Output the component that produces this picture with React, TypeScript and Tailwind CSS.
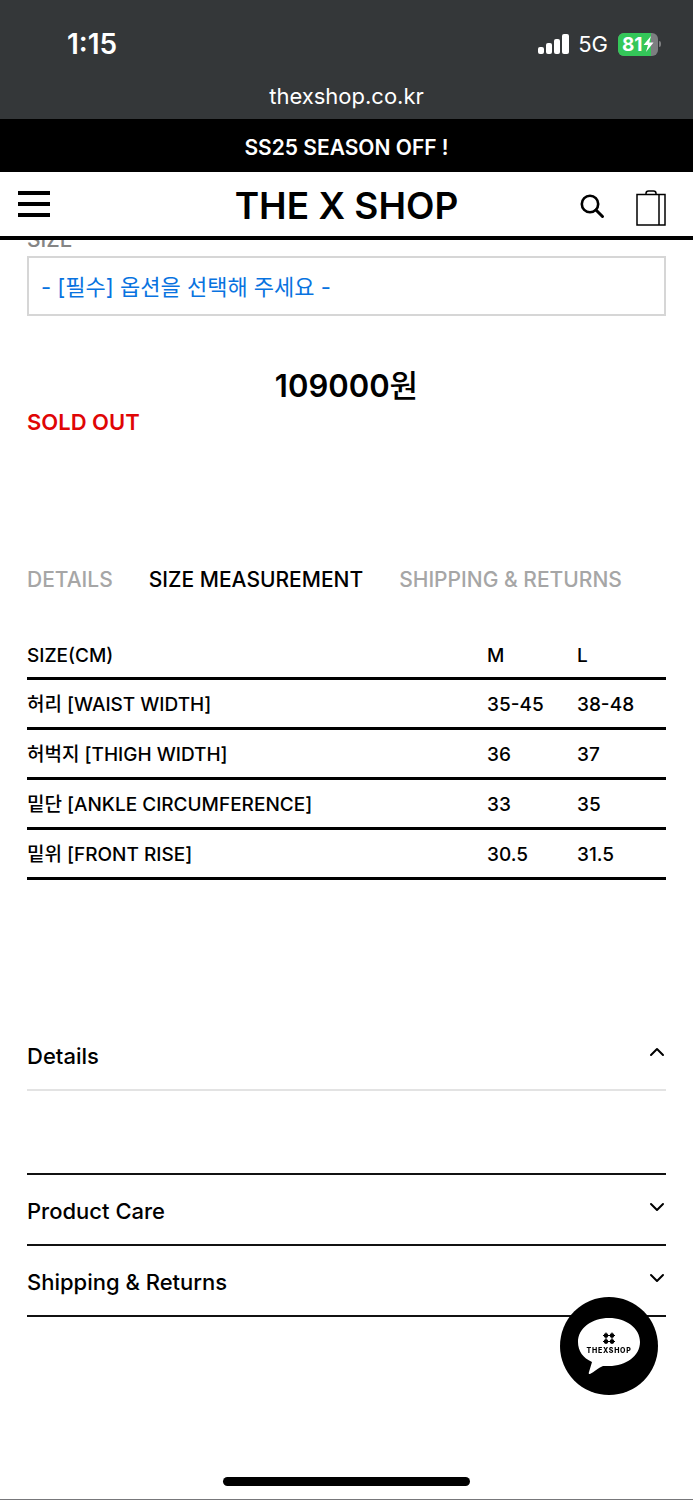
import { useState } from "react";
import { ChevronDown, ChevronUp } from "lucide-react";

const tabs = ["DETAILS", "SIZE MEASUREMENT", "SHIPPING & RETURNS"];

const measurements = [
    { label: "허리 [WAIST WIDTH]", m: "35-45", l: "38-48" },
    { label: "허벅지 [THIGH WIDTH]", m: "36", l: "37" },
    { label: "밑단 [ANKLE CIRCUMFERENCE]", m: "33", l: "35" },
    { label: "밑위 [FRONT RISE]", m: "30.5", l: "31.5" },
];

const sections = ["Details", "Product Care", "Shipping & Returns"];

function StatusBar() {
    return (
        <div className="bg-[#343739] text-white h-[119px] pt-6">
            <div className="flex items-center justify-between h-10 pl-[67px] pr-8">
                <span className="text-[28px] font-semibold">1:15</span>
                <div className="flex items-center">
                    <svg width="32" height="20" viewBox="0 0 32 20" fill="white">
                        <rect x="0" y="13" width="6" height="7" rx="2" />
                        <rect x="8" y="9" width="6" height="11" rx="2" />
                        <rect x="16" y="5" width="6" height="15" rx="2" />
                        <rect x="24" y="0" width="7" height="20" rx="2" />
                    </svg>
                    <span className="text-[22px] font-normal ml-2">5G</span>
                    <div className="relative flex items-center w-10 h-[23px] ml-2.5 rounded-md overflow-hidden bg-[#7c7e80]">
                        <div className="absolute inset-y-0 left-0 w-[33px] bg-[#34c759]" />
                        <span className="relative pl-1 text-[19px] leading-none font-bold">
                            81
                        </span>
                        <svg
                            className="relative"
                            width="11"
                            height="16"
                            viewBox="0 0 11 16"
                            fill="white"
                        >
                            <path d="M8 0 0.5 9H5L3 16 10.5 6.5H6.2Z" />
                        </svg>
                    </div>
                    <div className="w-0.5 h-1.5 ml-px rounded-r-full bg-[#7c7e80]" />
                </div>
            </div>
            <p className="text-center text-[22px] font-normal leading-8 mt-4">
                thexshop.co.kr
            </p>
        </div>
    );
}

function Header() {
    return (
        <header className="relative z-10 bg-white">
            <p className="flex items-center justify-center h-[53px] pt-1 bg-black text-white text-[21px] font-semibold">
                SS25 SEASON OFF !
            </p>
            <div className="grid grid-cols-[1fr_auto_1fr] items-center h-[68px] border-b-4 border-black px-[18px]">
                <button
                    aria-label="Menu"
                    className="w-8 flex flex-col gap-[7px]"
                >
                    <span className="h-1 bg-black" />
                    <span className="h-1 bg-black" />
                    <span className="h-1 bg-black" />
                </button>
                <a
                    href="#"
                    className="pt-0.5 text-[37px] leading-none font-semibold"
                >
                    THE X SHOP
                </a>
                <div className="flex items-center justify-end gap-[30px] pt-1 pr-[9px]">
                    <button aria-label="Search">
                        <svg
                            width="28"
                            height="28"
                            viewBox="0 0 28 28"
                            fill="none"
                            stroke="black"
                            strokeWidth="2.6"
                            strokeLinecap="round"
                        >
                            <circle cx="12" cy="12" r="8.2" />
                            <path d="M18 18L24.5 24.5" strokeWidth="3" />
                        </svg>
                    </button>
                    <button aria-label="Cart" className="pt-1">
                        <svg
                            width="30"
                            height="36"
                            viewBox="0 0 30 36"
                            fill="none"
                            stroke="black"
                            strokeWidth="1.5"
                        >
                            <rect x="1" y="4.5" width="28" height="30.5" />
                            <path d="M23 4.5V35M10 4.5V3.5Q10 1 12.5 1H17.5Q20 1 20 3.5V4.5" />
                        </svg>
                    </button>
                </div>
            </div>
        </header>
    );
}

function SizeTable() {
    return (
        <table className="w-full text-left text-[19px] mt-8">
            <thead>
                <tr className="h-[50px] border-b-3 border-black">
                    <th className="pt-2 font-medium">SIZE(CM)</th>
                    <th className="pt-2 font-medium w-[90px]">M</th>
                    <th className="pt-2 font-medium w-[89px]">L</th>
                </tr>
            </thead>
            <tbody>
                {measurements.map((row) => (
                    <tr
                        key={row.label}
                        className="h-[50px] border-b-3 border-black"
                    >
                        <td className="pt-1">{row.label}</td>
                        <td className="pt-1">{row.m}</td>
                        <td className="pt-1">{row.l}</td>
                    </tr>
                ))}
            </tbody>
        </table>
    );
}

function ChatButton() {
    return (
        <button className="fixed right-[35px] bottom-[105px] z-20 w-[98px] h-[98px] rounded-full bg-black">
            <svg
                className="absolute inset-0"
                width="98"
                height="98"
                viewBox="0 0 98 98"
                fill="white"
            >
                <path d="M49 21C66 21 80 31 80 45S66 69 49 69Q46 69 43 69C38 71 34 75 30 77Q28 77 29 75L32 65C23 61 18 54 18 45C18 31 32 21 49 21Z" />
                <g fill="black">
                    <path d="M43 38H55V39H43ZM43 44H55V45H43ZM45.5 35.5H46.5V47H45.5ZM51.5 35.5H52.5V47H51.5Z" />
                    <circle cx="46" cy="38.5" r="2.3" />
                    <circle cx="52" cy="38.5" r="2.3" />
                    <circle cx="46" cy="44.5" r="2.3" />
                    <circle cx="52" cy="44.5" r="2.3" />
                </g>
            </svg>
            <span className="relative block pt-2 text-[7px] leading-none font-extrabold tracking-widest text-black">
                THEXSHOP
            </span>
        </button>
    );
}

export default function App() {
    const [activeTab, setActiveTab] = useState("SIZE MEASUREMENT");
    const [openSection, setOpenSection] = useState("Details");

    return (
        <div className="flex flex-col min-h-screen bg-white text-black font-medium font-[Inter,'Noto_Sans_CJK_KR',sans-serif] border-b border-[#77777a]">
            <StatusBar />
            <Header />
            <main className="flex-1 px-[27px]">
                <label
                    htmlFor="size"
                    className="block -mt-4 text-[21px] leading-8 text-[#858585]"
                >
                    SIZE
                </label>
                <select
                    id="size"
                    className="block w-full h-[60px] appearance-none border-2 border-[#d6d6d6] px-3 pt-0.5 text-[22px] font-normal text-[#0873e0]"
                >
                    <option>- [필수] 옵션을 선택해 주세요 -</option>
                </select>

                <p className="text-center text-[31px] font-semibold leading-10 mt-[50px]">
                    109000<span className="font-medium">원</span>
                </p>
                <p className="text-[22px] font-semibold leading-8 text-[#e00505]">
                    SOLD OUT
                </p>

                <div className="flex gap-9 mt-[126px] text-[21px] leading-8">
                    {tabs.map((tab) => (
                        <button
                            key={tab}
                            className={`whitespace-nowrap ${
                                tab === activeTab
                                    ? "text-black"
                                    : "text-[#a6a6a6]"
                            }`}
                            onClick={() => setActiveTab(tab)}
                        >
                            {tab}
                        </button>
                    ))}
                </div>
                <SizeTable />

                <div className="mt-[140px]">
                    {sections.map((section) => {
                        const open = section === openSection;
                        return (
                            <div
                                key={section}
                                className="border-b-2 border-[#111111]"
                            >
                                <button
                                    className={`flex items-center justify-between w-full pt-1 text-[22px] ${
                                        open
                                            ? "h-[71px] border-b-2 border-[#e3e3e3]"
                                            : "h-[69px]"
                                    }`}
                                    onClick={() =>
                                        setOpenSection(open ? "" : section)
                                    }
                                >
                                    {section}
                                    {open ? (
                                        <ChevronUp className="w-6 h-6 -mr-[3px] mb-2" />
                                    ) : (
                                        <ChevronDown className="w-6 h-6 -mr-[3px] mb-2" />
                                    )}
                                </button>
                                {open && <div className="h-[82px]" />}
                            </div>
                        );
                    })}
                </div>
            </main>
            <ChatButton />
            <div className="w-[247px] h-[9px] mx-auto mb-[13px] rounded-full bg-black" />
        </div>
    );
}
